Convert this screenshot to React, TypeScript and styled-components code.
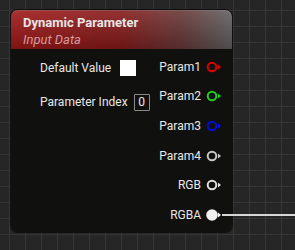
import React from 'react';
import styled, { createGlobalStyle } from 'styled-components';

const GlobalStyle = createGlobalStyle`
  html, body {
    margin: 0;
    padding: 0;
    background: #262626;
  }
  body {
    font-family: Roboto, "Liberation Sans", sans-serif;
  }
`;

const Canvas = styled.div`
  position: relative;
  width: 295px;
  height: 250px;
  overflow: hidden;
  background-color: #262626;
  background-image:
    linear-gradient(to right, #353535 1px, transparent 1px),
    linear-gradient(to bottom, #353535 1px, transparent 1px);
  background-size: 16px 16px;
  background-position: 9px 10px;
  padding: 10px 0 0 11px;
  box-sizing: border-box;
`;

const Node = styled.div`
  position: relative;
  width: 221px;
  height: 222px;
  border-radius: 7px;
  background: rgba(15, 16, 14, 0.97);
  box-shadow: 0 0 0 1px rgba(0, 0, 0, 0.6);
  display: flex;
  flex-direction: column;
`;

const Header = styled.div`
  height: 39px;
  border-radius: 7px 7px 0 0;
  padding: 4px 0 0 12px;
  box-sizing: border-box;
  background:
    linear-gradient(to bottom, rgba(255, 255, 255, 0.1), rgba(0, 0, 0, 0.2)),
    linear-gradient(to right, #a01818 0%, #861a1a 50%, #663838 78%, #606060 100%);
  border-top: 1px solid rgba(255, 255, 255, 0.25);
`;

const Title = styled.div`
  color: #e6e6e6;
  font-weight: bold;
  font-size: 13px;
  line-height: 16px;
`;

const Subtitle = styled.div`
  color: #d49a9a;
  font-style: italic;
  font-size: 13px;
  line-height: 17px;
`;

const Body = styled.div`
  flex: 1;
  display: flex;
  justify-content: space-between;
`;

const Inputs = styled.div`
  display: flex;
  flex-direction: column;
  gap: 18px;
  padding: 11px 0 0 29px;
`;

const InputRow = styled.div`
  display: flex;
  align-items: center;
  gap: 6px;
  height: 16px;
  color: #e8e8e8;
  font-size: 12px;
`;

const ColorSwatch = styled.div`
  width: 16px;
  height: 16px;
  background: #ffffff;
  margin-left: 3px;
`;

const IndexBox = styled.div`
  width: 14px;
  height: 15px;
  border: 1px solid #8a8a8a;
  border-radius: 1px;
  color: #e8e8e8;
  font-size: 12px;
  display: flex;
  align-items: center;
  justify-content: center;
`;

const Outputs = styled.div`
  display: flex;
  flex-direction: column;
  padding: 3px 10px 0 0;
`;

const OutputRow = styled.div`
  height: 29.6px;
  display: flex;
  align-items: center;
  justify-content: flex-end;
  gap: 5px;
  color: #e8e8e8;
  font-size: 12px;
`;

const Wire = styled.div`
  position: absolute;
  left: 222px;
  top: 214px;
  width: 80px;
  height: 2px;
  background: #d6d6d6;
`;

const Pin = ({ color, filled }: { color: string; filled?: boolean }) => (
  <svg width="16" height="12" viewBox="0 0 16 12">
    {filled ? (
      <circle cx="6" cy="6" r="5.8" fill={color} />
    ) : (
      <circle cx="6" cy="6" r="4.3" fill="none" stroke={color} strokeWidth="2" />
    )}
    <polygon points="12,3.5 15,6 12,8.5" fill={color} />
  </svg>
);

const outputs = [
  { label: 'Param1', color: '#e00000' },
  { label: 'Param2', color: '#20d020' },
  { label: 'Param3', color: '#0010d8' },
  { label: 'Param4', color: '#c8c8c8' },
  { label: 'RGB', color: '#e0e0e0' },
  { label: 'RGBA', color: '#f0f0f0', filled: true },
];

const App = () => (
  <>
    <GlobalStyle />
    <Canvas>
      <Node>
        <Header>
          <Title>Dynamic Parameter</Title>
          <Subtitle>Input Data</Subtitle>
        </Header>
        <Body>
          <Inputs>
            <InputRow>
              Default Value <ColorSwatch />
            </InputRow>
            <InputRow>
              Parameter Index <IndexBox>0</IndexBox>
            </InputRow>
          </Inputs>
          <Outputs>
            {outputs.map((o) => (
              <OutputRow key={o.label}>
                {o.label}
                <Pin color={o.color} filled={o.filled} />
              </OutputRow>
            ))}
          </Outputs>
        </Body>
      </Node>
      <Wire />
    </Canvas>
  </>
);

export default App;
